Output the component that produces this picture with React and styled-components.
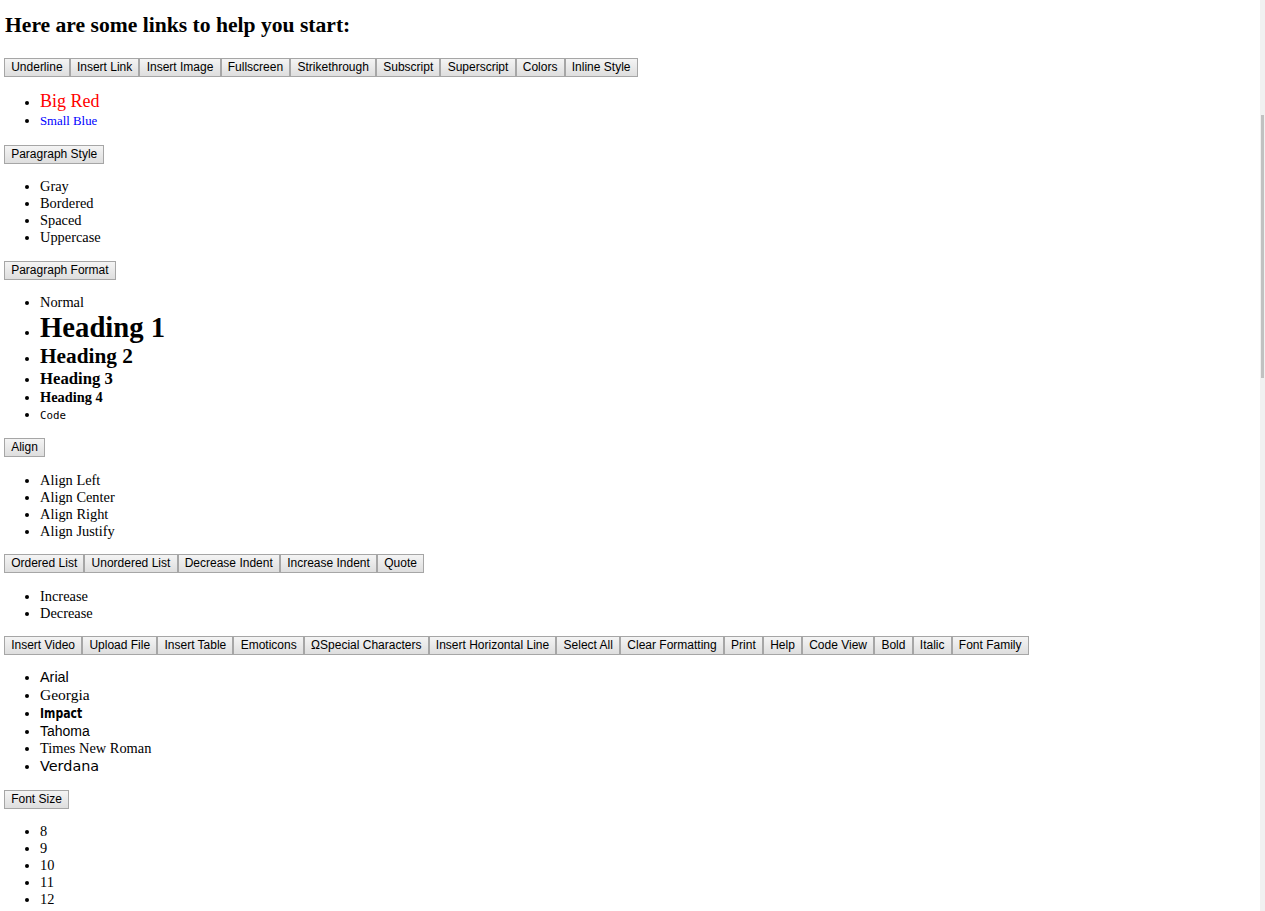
import React from "react"
import styled, { createGlobalStyle } from "styled-components"

const GlobalStyle = createGlobalStyle`
  html, body {
    margin: 0;
    padding: 0;
    background: #fff;
  }
  body {
    font-family: "Liberation Serif", "Times New Roman", serif;
    font-size: 14.4px;
    color: #000;
  }
`;

const Page = styled.div`
  padding: 0 4px 20px 4px;
  min-height: 911px;
  box-sizing: border-box;
`;

const Title = styled.h2`
  margin: 13px 0 20px 1px;
  font-size: 21.6px;
  line-height: 25px;
  font-weight: bold;
`;

const Toolbar = styled.div`
  display: flex;
  flex-wrap: wrap;
`;

const ToolButton = styled.button`
  height: 19px;
  padding: 0 6.2px;
  margin: 0;
  font-family: "Liberation Sans", Arial, sans-serif;
  font-size: 12px;
  line-height: 15px;
  color: #000;
  border: 1px solid #a6a6a6;
  border-radius: 0;
  background: linear-gradient(#f4f4f4, #dedede);
  white-space: nowrap;
`;

const OptionList = styled.ul`
  margin: 14.4px 0;
  padding-left: 36px;
  line-height: 17px;
`;

const Option = styled.li`
  line-height: ${p => p.$line || "17px"};
`;

const Label = styled.span`
  display: ${p => (p.$squeeze ? "inline-block" : "inline")};
  font-family: ${p => p.$font || "inherit"};
  font-size: ${p => p.$size || "inherit"};
  font-weight: ${p => p.$weight || "normal"};
  font-stretch: ${p => (p.$squeeze ? "condensed" : "normal")};
  color: ${p => p.$color || "inherit"};
  line-height: ${p => (p.$tall ? "normal" : "inherit")};
  transform: ${p => (p.$squeeze ? `scaleX(${p.$squeeze})` : "none")};
  transform-origin: left center;
`;

const ScrollTrack = styled.div`
  position: fixed;
  top: 0;
  right: 0;
  width: 5px;
  height: 911px;
  background: #f1f1f1;
`;

const ScrollThumb = styled.div`
  margin: 115px 0 0 1px;
  width: 3px;
  height: 263px;
  background: #c1c1c1;
`;

function Buttons({ labels }) {
  return (
    <Toolbar>
      {labels.map(l => <ToolButton key={l}>{l}</ToolButton>)}
    </Toolbar>
  )
}

function Options({ items }) {
  return (
    <OptionList>
      {items.map(it => (
        <Option key={it.text} $line={it.line}>
          <Label
            $font={it.font}
            $size={it.size}
            $weight={it.weight}
            $color={it.color}
            $tall={it.tall}
            $squeeze={it.squeeze}
          >
            {it.text}
          </Label>
        </Option>
      ))}
    </OptionList>
  )
}

const serif = '"Liberation Serif", "Times New Roman", serif';
const sans = '"Liberation Sans", Arial, sans-serif';

export default function App() {
  return (
    <Page>
      <GlobalStyle />
      <Title>Here are some links to help you start:</Title>
      <Buttons labels={["Underline", "Insert Link", "Insert Image", "Fullscreen", "Strikethrough", "Subscript", "Superscript", "Colors", "Inline Style"]} />
      <Options items={[
        { text: "Big Red", size: "18px", color: "#ff0000", tall: true },
        { text: "Small Blue", size: "12.8px", color: "#0000ff" },
      ]} />
      <Buttons labels={["Paragraph Style"]} />
      <Options items={[
        { text: "Gray" }, { text: "Bordered" }, { text: "Spaced" }, { text: "Uppercase" },
      ]} />
      <Buttons labels={["Paragraph Format"]} />
      <Options items={[
        { text: "Normal" },
        { text: "Heading 1", size: "28.7px", weight: "bold", tall: true },
        { text: "Heading 2", size: "21.3px", weight: "bold", tall: true },
        { text: "Heading 3", size: "16.7px", weight: "bold", line: "20px" },
        { text: "Heading 4", size: "14.4px", weight: "bold" },
        { text: "Code", size: "10.8px", font: '"DejaVu Sans Mono", "Liberation Mono", monospace' },
      ]} />
      <Buttons labels={["Align"]} />
      <Options items={[
        { text: "Align Left" }, { text: "Align Center" }, { text: "Align Right" }, { text: "Align Justify" },
      ]} />
      <Buttons labels={["Ordered List", "Unordered List", "Decrease Indent", "Increase Indent", "Quote"]} />
      <Options items={[{ text: "Increase" }, { text: "Decrease" }]} />
      <Buttons labels={["Insert Video", "Upload File", "Insert Table", "Emoticons", "\u03A9Special Characters", "Insert Horizontal Line", "Select All", "Clear Formatting", "Print", "Help", "Code View", "Bold", "Italic", "Font Family"]} />
      <Options items={[
        { text: "Arial", font: sans },
        { text: "Georgia", font: serif, size: "15.5px", line: "18px" },
        { text: "Impact", font: '"DejaVu Sans", sans-serif', weight: 900, size: "14.4px", squeeze: 0.84, line: "18px" },
        { text: "Tahoma", font: sans, size: "14px", line: "18px" },
        { text: "Times New Roman", font: serif },
        { text: "Verdana", font: '"DejaVu Sans", Verdana, sans-serif', line: "18px" },
      ]} />
      <Buttons labels={["Font Size"]} />
      <Options items={[{ text: "8" }, { text: "9" }, { text: "10" }, { text: "11" }, { text: "12" }]} />
      <ScrollTrack><ScrollThumb /></ScrollTrack>
    </Page>
  )
}
